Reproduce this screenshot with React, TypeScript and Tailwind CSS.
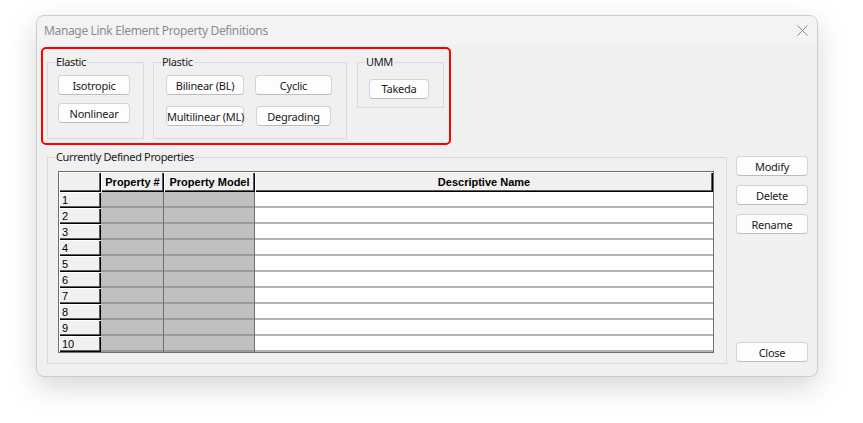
import React from 'react';

const ui = "font-['Noto_Sans',sans-serif]";
const grid = "font-['Liberation_Sans',Arial,sans-serif]";

const DlgButton: React.FC<{ label: string; className?: string }> = ({ label, className = '' }) => (
  <button
    className={`h-[20px] whitespace-nowrap rounded-[4px] border border-[#d3d3d3] border-b-[#bcbcbc] bg-[#fdfdfd] text-[11px] leading-none tracking-[-0.25px] text-[#1a1a1a] ${className}`}
  >
    {label}
  </button>
);

const Group: React.FC<{ title: string; className?: string; children: React.ReactNode }> = ({ title, className = '', children }) => (
  <fieldset className={`border border-[#d9d9d9] ${className}`}>
    <legend className="ml-[7px] px-[1px] text-[11px] leading-[12px] tracking-[-0.35px] text-[#1a1a1a]">{title}</legend>
    {children}
  </fieldset>
);

const head3d = 'bg-[#f0f0f0] shadow-[inset_1px_1px_0_#ffffff,inset_-1px_-1px_0_#000000,inset_-2px_-2px_0_#5c5c5c]';

const rows = [1, 2, 3, 4, 5, 6, 7, 8, 9, 10];

const PropertyGrid: React.FC = () => (
  <div className={`w-[656px] border border-[#6e6e6e] ${grid} text-[11px] text-black`}>
    <div className="flex h-[20px]">
      <div className={`w-[42px] ${head3d}`} />
      <div className={`flex w-[63px] items-center justify-center font-bold ${head3d}`}>Property #</div>
      <div className={`flex w-[91px] items-center justify-center font-bold ${head3d}`}>Property Model</div>
      <div className={`flex w-[458px] items-center justify-center font-bold ${head3d}`}>Descriptive Name</div>
    </div>
    {rows.map((n) => (
      <div key={n} className="flex h-[16px]">
        <div className={`flex w-[42px] items-center pl-[3px] ${head3d}`}>{n}</div>
        <div className="w-[63px] border-r border-r-[#6e6e6e] bg-[#c0c0c0] shadow-[inset_0_-2px_0_#9a9a9a]" />
        <div className="w-[91px] border-r border-r-[#6e6e6e] bg-[#c0c0c0] shadow-[inset_0_-2px_0_#9a9a9a]" />
        <div className="w-[458px] bg-white shadow-[inset_0_-2px_0_#b4b4b4]" />
      </div>
    ))}
  </div>
);

export default function App() {
  return (
    <div className={`h-[423px] w-[863px] bg-white pl-[36px] pt-[15px] ${ui}`}>
      <div className="flex h-[362px] w-[782px] flex-col overflow-hidden rounded-[8px] border border-[#cccccc] bg-[#f0f0f0] shadow-[0_10px_28px_rgba(0,0,0,0.16)]">
        {/* title bar */}
        <div className="flex h-[29px] shrink-0 items-center justify-between bg-[#f3f3f3] pl-[7px] pr-[9px]">
          <span className="text-[12px] tracking-[-0.35px] text-[#8c8c8c]">Manage Link Element Property Definitions</span>
          <svg width="11" height="11" viewBox="0 0 11 11" className="text-[#8a8a8a]">
            <path d="M0.5 0.5 L10.5 10.5 M10.5 0.5 L0.5 10.5" stroke="currentColor" strokeWidth="1" fill="none" />
          </svg>
        </div>

        <div className="flex flex-col px-[4px] pt-[2px]">
          {/* link type selection */}
          <div className="flex h-[98px] w-[410px] items-start rounded-[5px] border-2 border-[#ff0000] pl-[4px] pt-[7px]">
            <Group title="Elastic" className="h-[83px] w-[97px]">
              <div className="flex flex-col gap-[8px] pl-[10px] pt-[7px]">
                <DlgButton label="Isotropic" className="w-[72px]" />
                <DlgButton label="Nonlinear" className="w-[72px]" />
              </div>
            </Group>
            <Group title="Plastic" className="ml-[9px] h-[83px] w-[194px]">
              <div className="grid grid-cols-[78px_77px] gap-x-[11px] gap-y-[11px] pl-[12px] pt-[7px]">
                <DlgButton label="Bilinear (BL)" />
                <DlgButton label="Cyclic" />
                <DlgButton label="Multilinear (ML)" />
                <DlgButton label="Degrading" className="ml-[1px] w-[75px]" />
              </div>
            </Group>
            <Group title="UMM" className="ml-[10px] h-[52px] w-[87px]">
              <div className="pl-[11px] pt-[7px]">
                <DlgButton label="Takeda" className="w-[60px]" />
              </div>
            </Group>
          </div>

          {/* defined properties */}
          <div className="mt-[6px] flex items-start">
            <Group title="Currently Defined Properties" className="ml-[6px] h-[213px] w-[680px]">
              <div className="pl-[10px] pt-[8px]">
                <PropertyGrid />
              </div>
            </Group>
            <div className="ml-[9px] mt-[5px] flex h-[206px] flex-col gap-[9px]">
              <DlgButton label="Modify" className="w-[72px]" />
              <DlgButton label="Delete" className="w-[72px]" />
              <DlgButton label="Rename" className="w-[72px]" />
              <DlgButton label="Close" className="mt-auto w-[72px]" />
            </div>
          </div>
        </div>
      </div>
    </div>
  );
}
